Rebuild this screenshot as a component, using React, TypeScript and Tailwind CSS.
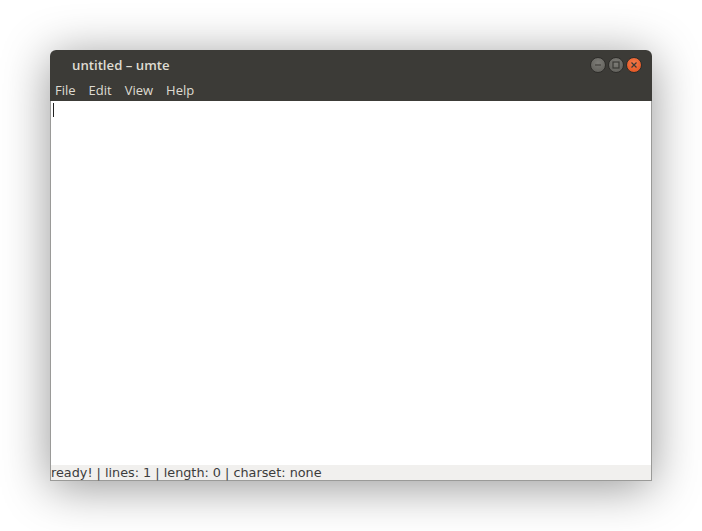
export default function App() {
    return (
        <div className="h-[531px] w-[702px] overflow-hidden bg-white pl-[50px] pt-[50px]">
            <div className="flex h-[431px] w-[602px] flex-col overflow-hidden rounded-t-[6px] shadow-[0_6px_48px_rgba(0,0,0,0.42)]">
                <div
                    className="flex h-[28px] items-center justify-between bg-[#3c3b37] pl-[22px] pr-[10px] text-[13.2px] font-semibold text-[#dfdbd2]"
                    style={{ fontFamily: '"Open Sans", sans-serif' }}
                >
                    <span className="pt-[4px]">untitled – umte</span>
                    <div className="flex items-center gap-[2px] pt-[2px]">
                        <WinButton kind="min" />
                        <WinButton kind="max" />
                        <WinButton kind="close" />
                    </div>
                </div>
                <div
                    className="flex h-[23px] items-center gap-[13px] bg-[#3c3b37] pl-[5px] pt-[2px] text-[13px] text-[#dfdbd2]"
                    style={{ fontFamily: '"Open Sans", sans-serif' }}
                >
                    <span>File</span>
                    <span>Edit</span>
                    <span>View</span>
                    <span>Help</span>
                </div>
                <div className="relative flex-1 border-x border-x-[#9a9a98] bg-white">
                    <div className="absolute left-[2px] top-[2px] h-[14px] w-px bg-[#222]" />
                </div>
                <div
                    className="flex h-[16px] items-center border-x border-b border-[#9a9a98] bg-[#f1f0ee] pt-[2px] text-[12.8px] leading-none text-[#3c3c3c]"
                    style={{ fontFamily: '"DejaVu Sans", sans-serif' }}
                >
                    ready! | lines: 1 | length: 0 | charset: none
                </div>
            </div>
        </div>
    )
}

function WinButton({ kind }: { kind: 'min' | 'max' | 'close' }) {
    const bg =
        kind === 'close'
            ? 'bg-[radial-gradient(circle_at_50%_35%,#f47a4a,#e0501c)]'
            : 'bg-[radial-gradient(circle_at_50%_35%,#7d7c77,#5c5b56)]'
    return (
        <div
            className={`flex h-[16px] w-[16px] items-center justify-center rounded-full border border-[#2e2d2a] ${bg}`}
        >
            <svg width="8" height="8" viewBox="0 0 8 8">
                {kind === 'min' && <path d="M1 4h6" stroke="#3a3935" strokeWidth="1.2" />}
                {kind === 'max' && (
                    <rect x="1" y="1" width="6" height="6" fill="none" stroke="#3a3935" strokeWidth="1.2" />
                )}
                {kind === 'close' && (
                    <path d="M1.5 1.5l5 5M6.5 1.5l-5 5" stroke="#3a3935" strokeWidth="1.2" />
                )}
            </svg>
        </div>
    )
}
